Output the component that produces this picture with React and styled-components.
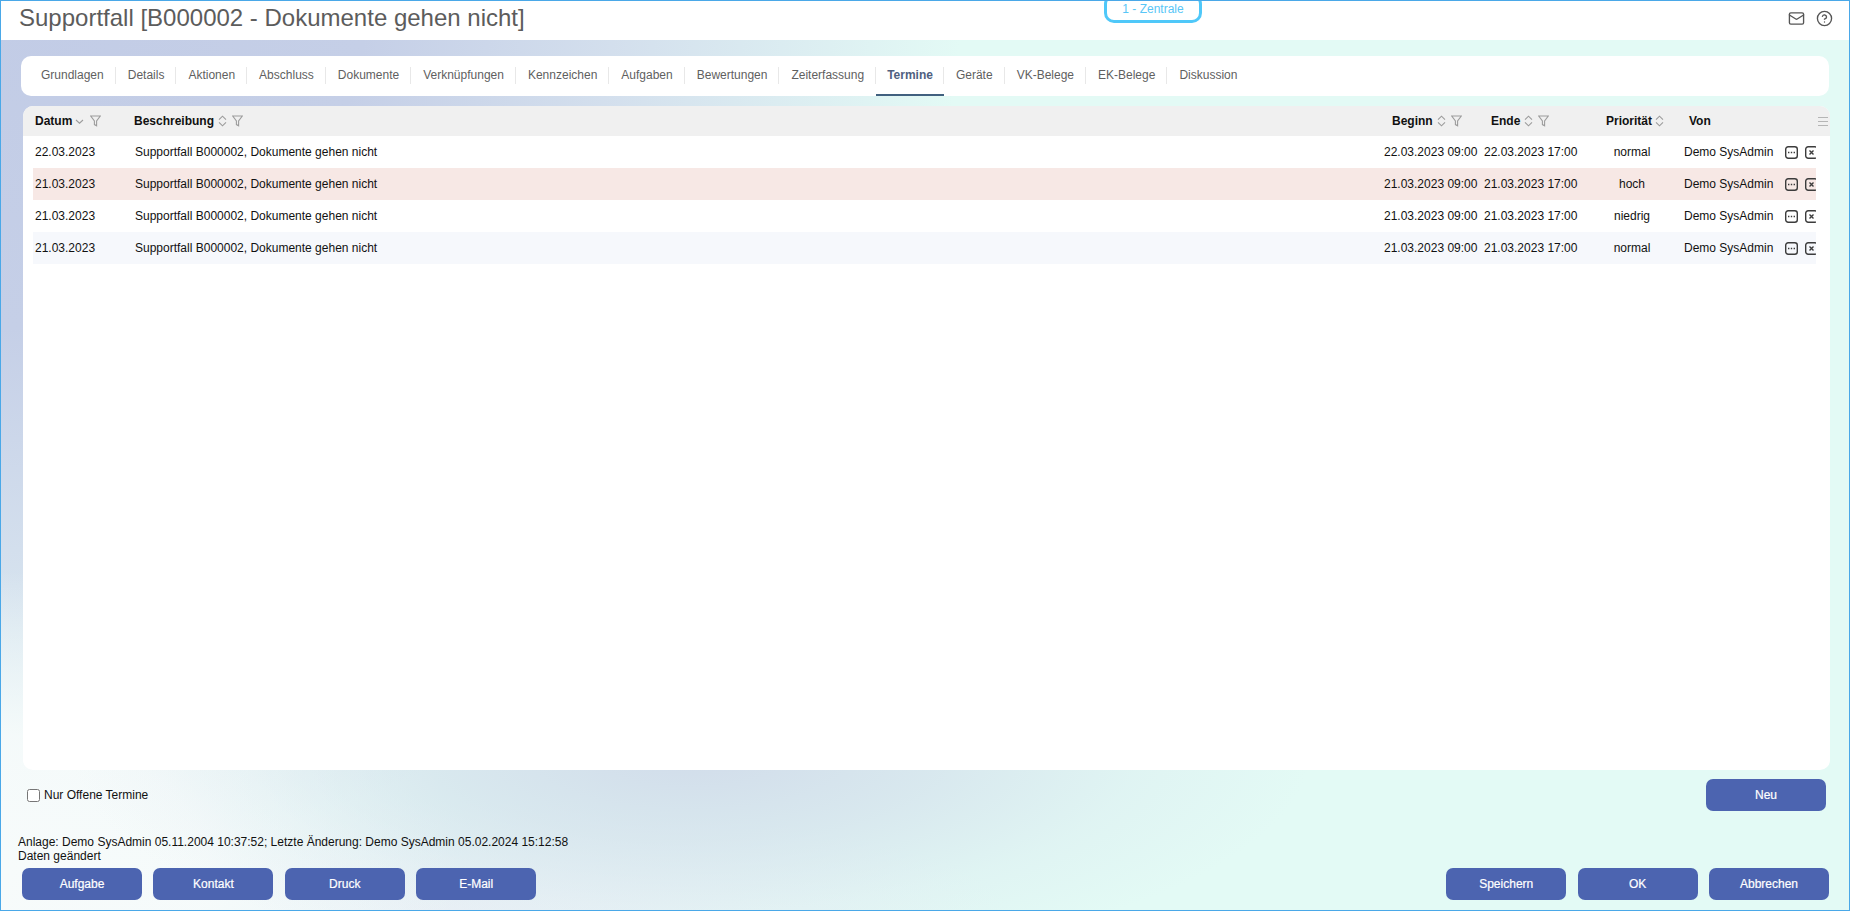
import { Mail, CircleHelp } from "lucide-react";
import styled, { createGlobalStyle } from "styled-components";

const GlobalStyle = createGlobalStyle`
    html, body {
        margin: 0;
        padding: 0;
        height: 100%;
        overflow: hidden;
        font-family: "Liberation Sans", Arial, sans-serif;
        font-size: 12px;
    }
`;

const SWindow = styled.div`
    position: relative;
    display: flex;
    flex-direction: column;
    box-sizing: border-box;
    width: 1850px;
    height: 911px;
    border: 1px solid #4aa8e8;
    overflow: hidden;
    background:
        radial-gradient(ellipse 620px 220px at 690px 750px, #d1dcea 0%, rgba(209, 220, 234, 0.6) 40%, rgba(209, 220, 234, 0.2) 72%, rgba(209, 220, 234, 0) 100%),
        radial-gradient(ellipse 460px 300px at 0 870px, #f7fbfb 0%, rgba(247, 251, 251, 0.9) 45%, rgba(247, 251, 251, 0) 100%),
        radial-gradient(ellipse 560px 110px at 450px 910px, rgba(236, 241, 247, 0.9) 0%, rgba(236, 241, 247, 0) 100%),
        radial-gradient(ellipse 960px 860px at 0 0, #c2cce6 0%, #c5cfe7 38%, rgba(209, 219, 236, 0.85) 65%, rgba(224, 247, 245, 0) 100%),
        #e3faf5;
`;

const SHeader = styled.header`
    position: relative;
    display: flex;
    align-items: center;
    justify-content: space-between;
    box-sizing: border-box;
    flex: 0 0 39px;
    padding: 0 16px 5px 18px;
    background: white;
`;

const STitle = styled.h1`
    margin: 0;
    font-size: 24px;
    font-weight: 400;
    color: #5c5c5c;
`;

const SBranch = styled.div`
    position: absolute;
    top: -7px;
    left: 1103px;
    display: flex;
    align-items: center;
    justify-content: center;
    box-sizing: border-box;
    width: 98px;
    height: 29px;
    border: 3px solid #4fc8f9;
    border-radius: 10px;
    color: #58c6f7;
`;

const SHeaderIcons = styled.div`
    display: flex;
    gap: 11px;
    color: #555;

    & svg {
        display: block;
    }
`;

const STabs = styled.nav`
    display: flex;
    box-sizing: border-box;
    height: 40px;
    margin: 16px 20px 0;
    padding-left: 8px;
    background: white;
    border-radius: 10px;
`;

const STab = styled.div`
    position: relative;
    display: flex;
    align-items: center;
    padding: 0 ${props => props.$active ? '11px' : '12px'};
    font-weight: ${props => props.$active ? '700' : '400'};
    color: ${props => props.$active ? '#4f5f7f' : '#5f5f5f'};
    border-bottom: 2px solid ${props => props.$active ? '#41607f' : 'transparent'};

    &:not(:last-child):after {
        content: '';
        position: absolute;
        top: 11px;
        right: 0;
        width: 1px;
        height: 17px;
        background: #e8e8e8;
    }
`;

const STable = styled.section`
    display: flex;
    flex-direction: column;
    flex: 0 0 664px;
    margin: 10px 19px 0 22px;
    background: white;
    border-radius: 10px;
    overflow: hidden;
`;

const columns = "100px 1fr 100px 100px 100px 96px 38px";

const STableHead = styled.div`
    position: relative;
    display: grid;
    grid-template-columns: ${columns};
    flex: 0 0 30px;
    padding: 0 14px 0 10px;
    background: #f0f0f0;
`;

const SHeadCell = styled.div`
    display: flex;
    align-items: center;
    padding-left: ${props => props.$indent}px;
    font-weight: 700;
    color: #111;
    white-space: nowrap;
`;

const SHeadIcon = styled.svg`
    flex: none;
    margin-left: ${props => props.$gap}px;
    color: #9c9c9c;
`;

const SColumnsMenu = styled.svg`
    position: absolute;
    top: 11px;
    right: 2px;
    color: #b5b5b5;
`;

const STableRow = styled.div`
    display: grid;
    grid-template-columns: ${columns};
    height: 32px;
    margin: 0 14px 0 10px;
    background: ${props => props.$tone === 'high' ? '#f7e8e5' : props.$tone === 'alt' ? '#f6f8fc' : 'white'};
`;

const SCell = styled.div`
    display: flex;
    align-items: center;
    justify-content: ${props => props.$center ? 'center' : 'flex-start'};
    padding-left: ${props => props.$center ? '0' : '2px'};
    color: #111;
    white-space: nowrap;
`;

const SActions = styled.div`
    display: flex;
    align-items: center;
    gap: 7px;
    padding-left: 7px;
    overflow: hidden;
    color: #3c3c3c;

    & svg {
        flex: none;
    }
`;

const SToolRow = styled.div`
    display: flex;
    align-items: center;
    justify-content: space-between;
    margin: 9px 23px 0 26px;
`;

const SCheckLabel = styled.label`
    display: flex;
    align-items: center;
    gap: 4px;
    color: #111;

    & input {
        width: 13px;
        height: 13px;
        margin: 0;
    }
`;

const SStatus = styled.div`
    margin: 24px 0 0 17px;
    line-height: 14px;
    color: #111;
`;

const SButtonBar = styled.div`
    display: flex;
    justify-content: space-between;
    margin: 5px 20px 0 21px;
`;

const SButtonGroup = styled.div`
    display: flex;
    gap: 11.4px;
`;

const SButton = styled.button`
    width: 120px;
    height: 32px;
    padding: 0;
    border: 0;
    border-radius: 7px;
    background: #4c64b0;
    color: white;
    font-family: inherit;
    font-size: 12px;
    -webkit-text-stroke: 0.2px white;
`;

const tabs = [
    "Grundlagen", "Details", "Aktionen", "Abschluss", "Dokumente", "Verknüpfungen", "Kennzeichen", "Aufgaben",
    "Bewertungen", "Zeiterfassung", "Termine", "Geräte", "VK-Belege", "EK-Belege", "Diskussion",
];

const rows = [
    { date: "22.03.2023", prio: "normal" },
    { date: "21.03.2023", prio: "hoch", tone: "high" },
    { date: "21.03.2023", prio: "niedrig" },
    { date: "21.03.2023", prio: "normal", tone: "alt" },
];

function SortIcon({ gap, down }) {
    return (
        <SHeadIcon $gap={gap} width="9" height="12" viewBox="0 0 9 12" fill="none" stroke="currentColor" strokeWidth="1.1">
            {!down && <path d="M1 4.6 4.5 1.2 8 4.6"/>}
            <path d={down ? "M1 5 4.5 8.2 8 5" : "M1 7.4 4.5 10.8 8 7.4"}/>
        </SHeadIcon>
    );
}

function FilterIcon({ gap = 5 }) {
    return (
        <SHeadIcon $gap={gap} width="11" height="12" viewBox="0 0 11 12" fill="none" stroke="currentColor" strokeWidth="1.1">
            <path d="M.7 1h9.6L6.6 6v4.8L4.4 9.6V6z"/>
        </SHeadIcon>
    );
}

function RowButtons() {
    return (
        <SActions>
            <svg width="13" height="13" viewBox="0 0 13 13" fill="none" stroke="currentColor" strokeWidth="1.4">
                <rect x=".7" y=".7" width="11.6" height="11.6" rx="2.5"/>
                <path d="M3 6.5h1.4M5.8 6.5h1.4M8.6 6.5H10" strokeWidth="1.5"/>
            </svg>
            <svg width="13" height="13" viewBox="0 0 13 13" fill="none" stroke="currentColor" strokeWidth="1.4">
                <rect x=".7" y=".7" width="11.6" height="11.6" rx="2.5"/>
                <path d="M4.5 4.5l4 4M8.5 4.5l-4 4"/>
            </svg>
        </SActions>
    );
}

export default function App() {
    return (
        <SWindow>
            <GlobalStyle/>

            <SHeader>
                <STitle>Supportfall [B000002 - Dokumente gehen nicht]</STitle>
                <SBranch>1 - Zentrale</SBranch>
                <SHeaderIcons>
                    <Mail size={17} strokeWidth={1.9}/>
                    <CircleHelp size={17} strokeWidth={1.9}/>
                </SHeaderIcons>
            </SHeader>

            <STabs>
                {tabs.map(tab => <STab key={tab} $active={tab === "Termine"}>{tab}</STab>)}
            </STabs>

            <STable>
                <STableHead>
                    <SHeadCell $indent={2}>Datum<SortIcon gap={3} down/><FilterIcon gap={6}/></SHeadCell>
                    <SHeadCell $indent={1}>Beschreibung<SortIcon gap={4}/><FilterIcon/></SHeadCell>
                    <SHeadCell $indent={10}>Beginn<SortIcon gap={4}/><FilterIcon/></SHeadCell>
                    <SHeadCell $indent={9}>Ende<SortIcon gap={4}/><FilterIcon/></SHeadCell>
                    <SHeadCell $indent={24}>Priorität<SortIcon gap={3}/></SHeadCell>
                    <SHeadCell $indent={7}>Von</SHeadCell>
                    <SHeadCell/>
                    <SColumnsMenu width="10" height="9" viewBox="0 0 10 9" stroke="currentColor" strokeWidth="1">
                        <path d="M0 .5h10M0 4.5h10M0 8.5h10"/>
                    </SColumnsMenu>
                </STableHead>

                {rows.map((row, i) => (
                    <STableRow key={i} $tone={row.tone}>
                        <SCell>{row.date}</SCell>
                        <SCell>Supportfall B000002, Dokumente gehen nicht</SCell>
                        <SCell>{row.date} 09:00</SCell>
                        <SCell>{row.date} 17:00</SCell>
                        <SCell $center>{row.prio}</SCell>
                        <SCell>Demo SysAdmin</SCell>
                        <RowButtons/>
                    </STableRow>
                ))}
            </STable>

            <SToolRow>
                <SCheckLabel>
                    <input type="checkbox"/>
                    Nur Offene Termine
                </SCheckLabel>
                <SButton>Neu</SButton>
            </SToolRow>

            <SStatus>
                <div>Anlage: Demo SysAdmin 05.11.2004 10:37:52; Letzte Änderung: Demo SysAdmin 05.02.2024 15:12:58</div>
                <div>Daten geändert</div>
            </SStatus>

            <SButtonBar>
                <SButtonGroup>
                    <SButton>Aufgabe</SButton>
                    <SButton>Kontakt</SButton>
                    <SButton>Druck</SButton>
                    <SButton>E-Mail</SButton>
                </SButtonGroup>
                <SButtonGroup>
                    <SButton>Speichern</SButton>
                    <SButton>OK</SButton>
                    <SButton>Abbrechen</SButton>
                </SButtonGroup>
            </SButtonBar>
        </SWindow>
    );
}
